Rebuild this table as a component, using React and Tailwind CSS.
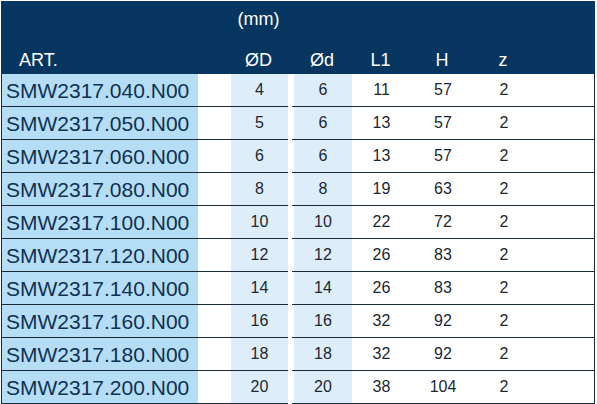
const rows = [
  ["SMW2317.040.N00", 4, 6, 11, 57, 2],
  ["SMW2317.050.N00", 5, 6, 13, 57, 2],
  ["SMW2317.060.N00", 6, 6, 13, 57, 2],
  ["SMW2317.080.N00", 8, 8, 19, 63, 2],
  ["SMW2317.100.N00", 10, 10, 22, 72, 2],
  ["SMW2317.120.N00", 12, 12, 26, 83, 2],
  ["SMW2317.140.N00", 14, 14, 26, 83, 2],
  ["SMW2317.160.N00", 16, 16, 32, 92, 2],
  ["SMW2317.180.N00", 18, 18, 32, 92, 2],
  ["SMW2317.200.N00", 20, 20, 38, 104, 2],
];

const App = () => {
  return (
    <div
      className="w-[597px] h-[404px] bg-white pt-px pl-px overflow-hidden"
      style={{ fontFamily: '"Liberation Sans", Arial, sans-serif' }}
    >
      <div className="w-[594px] h-[73px] bg-[#06355f] text-white text-[18px] flex flex-col">
        <div className="flex h-[37px] items-center">
          <div className="w-[229px]" />
          <div className="w-[57px] text-center">(mm)</div>
        </div>
        <div className="flex h-[36px] items-center leading-none pt-[8px]">
          <div className="w-[229px] pl-[18px]">ART.</div>
          <div className="w-[57px] text-center">ØD</div>
          <div className="w-[6px]" />
          <div className="w-[58px] text-center">Ød</div>
          <div className="w-[59px] text-center">L1</div>
          <div className="w-[64px] text-center">H</div>
          <div className="w-[58px] text-center">z</div>
        </div>
      </div>
      <div className="w-[594px] border-l border-r border-[#1b2a38]">
        {rows.map((r) => (
          <div key={r[0]} className="flex h-[33px] text-[16px] text-[#1c2733]">
            <div className="w-[196px] bg-[#b5ddf5] border-b border-[#1b2a38] text-[21px] text-[#0f3151] pl-[4px] flex items-center leading-none">
              {r[0]}
            </div>
            <div className="w-[33px] border-b border-[#1b2a38]" />
            <div className="w-[57px] bg-[#ddeefa] border-b border-[#1b2a38] flex items-center justify-center">
              {r[1]}
            </div>
            <div className="w-[6px] flex flex-col">
              <div className="flex-1" />
              <div className="w-[2px] ml-[4px] h-px bg-[#1b2a38]" />
            </div>
            <div className="w-[58px] bg-[#ddeefa] border-b border-[#1b2a38] flex items-center justify-center">
              {r[2]}
            </div>
            <div className="w-[59px] border-b border-[#1b2a38] flex items-center justify-center">
              {r[3]}
            </div>
            <div className="w-[64px] border-b border-[#1b2a38] flex items-center justify-center">
              {r[4]}
            </div>
            <div className="w-[58px] border-b border-[#1b2a38] flex items-center justify-center">
              {r[5]}
            </div>
            <div className="flex-1 border-b border-[#1b2a38]" />
          </div>
        ))}
      </div>
    </div>
  );
};

export default App;
